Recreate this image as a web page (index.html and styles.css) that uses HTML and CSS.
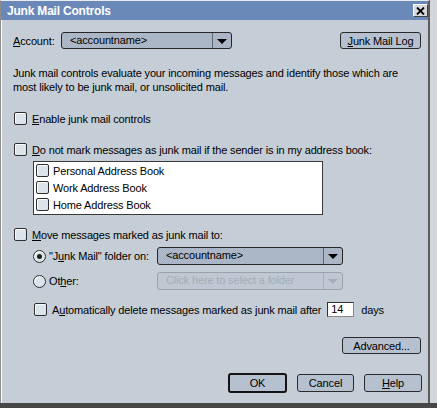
FILE: index.html
```html
<html lang="en">

<head>
    <meta charset="UTF-8" />
    <title>Junk Mail Controls</title>
    <link rel="stylesheet" href="styles.css">
</head>

<body>
    <div class="screen">
        <div class="window">
            <div class="titlebar">
                <span class="title">Junk Mail Controls</span>
                <span class="close">
                    <svg width="9" height="8" viewBox="0 0 9 8">
                        <path d="M1 0.5 L8 7.5 M8 0.5 L1 7.5" stroke="#000" stroke-width="1.8" fill="none" />
                    </svg>
                </span>
            </div>

            <div class="content">
                <div class="account_row">
                    <div class="account">
                        <span class="account_label"><u>A</u>ccount:</span>
                        <div class="combo combo_account">
                            <span class="combo_text">&lt;accountname&gt;</span>
                            <span class="combo_arrow"><i></i></span>
                        </div>
                    </div>
                    <button class="btn btn_log"><u>J</u>unk Mail Log</button>
                </div>

                <p class="desc">Junk mail controls evaluate your incoming messages and identify those which are
                    most likely to be junk mail, or unsolicited mail.</p>

                <div class="check_row row_enable">
                    <span class="box"></span>
                    <span><u>E</u>nable junk mail controls</span>
                </div>

                <div class="check_row row_donot">
                    <span class="box"></span>
                    <span><u>D</u>o not mark messages as junk mail if the sender is in my address book:</span>
                </div>

                <div class="book_list">
                    <div class="book_item"><span class="box"></span><span>Personal Address Book</span></div>
                    <div class="book_item"><span class="box"></span><span>Work Address Book</span></div>
                    <div class="book_item"><span class="box"></span><span>Home Address Book</span></div>
                </div>

                <div class="check_row row_move">
                    <span class="box"></span>
                    <span><u>M</u>ove messages marked as junk mail to:</span>
                </div>

                <div class="radio_row row_junk">
                    <span class="radio radio_on"></span>
                    <span class="radio_label">"J<u>u</u>nk Mail" folder on:</span>
                    <div class="combo combo_folder">
                        <span class="combo_text">&lt;accountname&gt;</span>
                        <span class="combo_arrow"><i></i></span>
                    </div>
                </div>

                <div class="radio_row row_other">
                    <span class="radio"></span>
                    <span class="radio_label">Ot<u>h</u>er:</span>
                    <div class="combo combo_folder combo_off">
                        <span class="combo_text">Click here to select a folder</span>
                        <span class="combo_arrow"><i></i></span>
                    </div>
                </div>

                <div class="check_row row_auto">
                    <span class="box"></span>
                    <span>A<u>u</u>tomatically delete messages marked as junk mail after</span>
                    <span class="days_input">14</span>
                    <span class="days">days</span>
                </div>

                <div class="btn_row row_advanced">
                    <button class="btn btn_advanced">Advanced...</button>
                </div>

                <div class="btn_row row_main">
                    <button class="btn btn_ok">OK</button>
                    <button class="btn btn_cancel">Cancel</button>
                    <button class="btn btn_help"><u>H</u>elp</button>
                </div>
            </div>
        </div>
    </div>
</body>

</html>
```

FILE: styles.css
```css
body {
    margin: 0;
    font-family: "Liberation Sans", Arial, sans-serif;
    font-size: 11px;
    letter-spacing: -0.15px;
    color: #000;
}

.screen {
    width: 437px;
    height: 408px;
    box-sizing: border-box;
    background: #d4d7da;
    border-bottom: 5px solid #474747;
}

.window {
    width: 430px;
    height: 403px;
    box-sizing: border-box;
    background: #c5cdd6;
    border-left: 1px solid #8c8c8c;
    border-top: 1px solid #e8ecf0;
    border-right: 2px solid #5c5c5c;
    box-shadow: inset 1px 0 0 #fff;
}

.titlebar {
    height: 19px;
    background: #6a89b9;
    display: flex;
    align-items: center;
    justify-content: space-between;
    padding: 0 0 0 6px;
}

.title {
    color: #fff;
    font-weight: bold;
    font-size: 12px;
    letter-spacing: -0.2px;
}

.close {
    width: 15px;
    height: 13px;
    box-sizing: border-box;
    background: #d6dade;
    border: 1px solid;
    border-color: #fff #404040 #404040 #fff;
    display: flex;
    align-items: center;
    justify-content: center;
}

.content {
    padding: 12px 6px 0 12px;
}

.account_row {
    display: flex;
    justify-content: space-between;
    align-items: center;
    height: 17px;
}

.account {
    display: flex;
    align-items: center;
}

.account_label {
    width: 48px;
}

/* combo boxes */
.combo {
    display: flex;
    box-sizing: border-box;
    border: 1px solid #262626;
    border-radius: 3px;
    background: repeating-conic-gradient(#a6b2c3 0 25%, #b0bbca 0 50%) 0 0/2px 2px;
    overflow: hidden;
}

.combo_account {
    width: 171px;
    height: 17px;
}

.combo_folder {
    width: 186px;
    height: 18px;
}

.combo_text {
    flex: 1;
    padding-left: 8px;
    line-height: 15px;
    white-space: nowrap;
}

.combo_arrow {
    width: 18px;
    border-left: 1px solid #5f6874;
    display: flex;
    align-items: center;
    justify-content: center;
}

.combo_arrow i {
    width: 0;
    height: 0;
    border-left: 5px solid transparent;
    border-right: 5px solid transparent;
    border-top: 5px solid #000;
    margin-top: 1px;
}

.combo_off {
    border-color: #99a2ad;
    background: #bfc8d2;
    color: #a3acb7;
}

.combo_off .combo_arrow {
    border-left-color: #a7b0ba;
}

.combo_off .combo_arrow i {
    border-top-color: #a3acb7;
}

/* buttons */
.btn {
    font-family: inherit;
    font-size: 11px;
    letter-spacing: -0.15px;
    color: #000;
    box-sizing: border-box;
    height: 17px;
    padding: 0;
    border: 1px solid #2a2a2a;
    border-radius: 3px;
    background: repeating-conic-gradient(#b2bdcc 0 25%, #bac4d2 0 50%) 0 0/2px 2px;
    line-height: 14px;
}

.btn_log {
    width: 81px;
    margin-right: 1px;
}

.desc {
    margin: 17px 0 0 0;
    line-height: 14px;
    width: 400px;
}

/* checkboxes */
.check_row {
    display: flex;
    align-items: center;
    height: 13px;
    white-space: nowrap;
}

.box {
    width: 13px;
    height: 13px;
    box-sizing: border-box;
    border: 1px solid #2e2e2e;
    border-radius: 2px;
    background: #dbe3eb;
    box-shadow: inset 1px 1px 0 #fff;
    flex-shrink: 0;
}

.check_row .box {
    margin: 0 5px 0 1px;
}

.row_enable {
    margin-top: 18px;
}

.row_donot {
    margin-top: 18px;
}

.book_list {
    margin: 5px 0 0 20px;
    width: 290px;
    height: 54px;
    box-sizing: border-box;
    background: #fff;
    border: 1px solid #3a3a3a;
    padding: 0 0 0 2px;
}

.book_item {
    display: flex;
    align-items: center;
    height: 17px;
}

.book_item .box {
    margin-right: 4px;
}

.row_move {
    margin-top: 13px;
}

/* radios */
.radio_row {
    display: flex;
    align-items: center;
    height: 18px;
    padding-left: 20px;
}

.row_junk {
    margin-top: 6px;
}

.row_other {
    margin-top: 7px;
}

.radio {
    width: 13px;
    height: 13px;
    box-sizing: border-box;
    border: 1px solid #2e2e2e;
    border-radius: 50%;
    background: #dbe3eb;
    box-shadow: inset 1px 1px 0 #fff;
    display: flex;
    align-items: center;
    justify-content: center;
    margin-right: 3px;
}

.radio_on::after {
    content: "";
    width: 5px;
    height: 5px;
    border-radius: 50%;
    background: #1e1e1e;
}

.radio_label {
    width: 108px;
    white-space: nowrap;
}

.row_auto {
    margin-top: 12px;
    height: 15px;
}

.row_auto .box {
    margin-left: 21px;
    margin-right: 5px;
}

.days_input {
    width: 27px;
    height: 15px;
    box-sizing: border-box;
    background: #fff;
    border: 1px solid;
    border-color: #333 #888 #888 #333;
    padding-left: 3px;
    line-height: 13px;
    margin-left: 6px;
}

.days {
    margin-left: 7px;
}

.btn_row {
    display: flex;
    justify-content: flex-end;
    align-items: center;
    padding-right: 1px;
}

.row_advanced {
    margin-top: 20px;
}

.btn_advanced {
    width: 79px;
}

.row_main {
    margin-top: 19px;
    height: 20px;
    gap: 10px;
}

.btn_ok {
    width: 59px;
    height: 20px;
    border: 2px solid #141414;
    line-height: 15px;
}

.btn_cancel {
    width: 57px;
    height: 18px;
}

.btn_help {
    width: 58px;
    height: 18px;
    margin-right: -1px;
}
```
